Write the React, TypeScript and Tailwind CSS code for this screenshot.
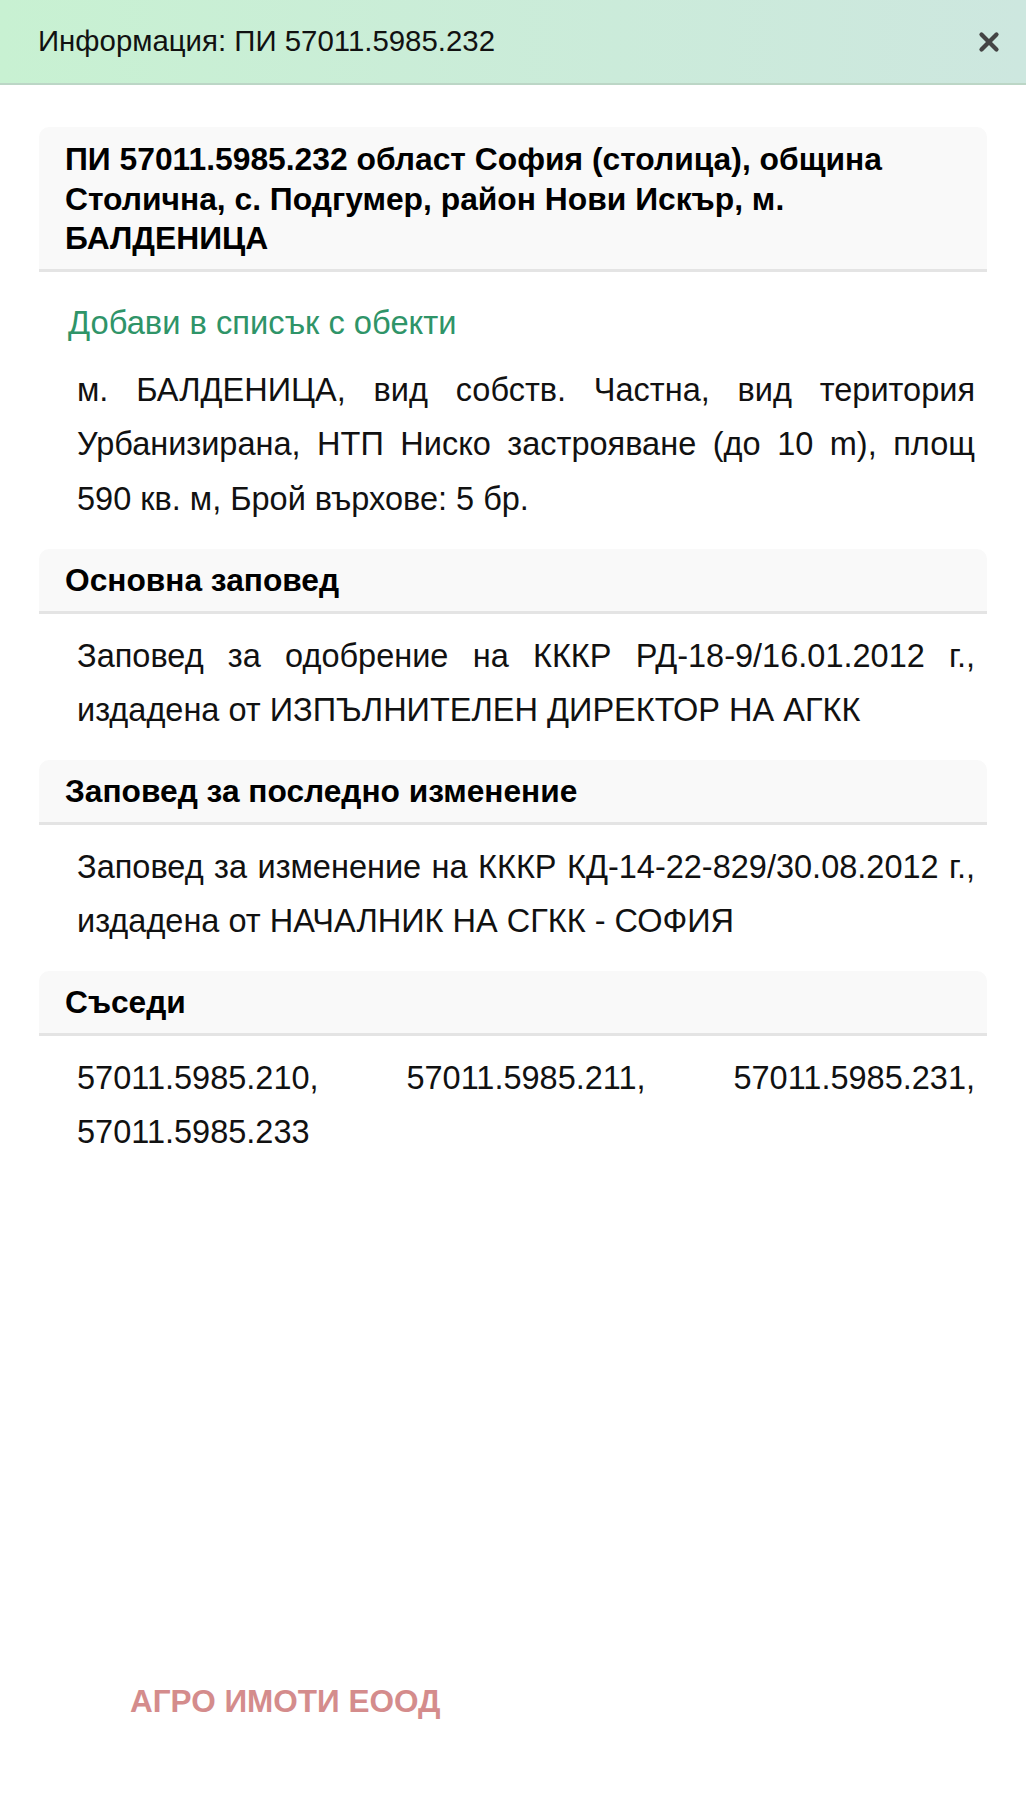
import { X } from 'lucide-react'

const sections = [
  {
    title: 'Основна заповед',
    body: 'Заповед за одобрение на КККР РД-18-9/16.01.2012 г., издадена от ИЗПЪЛНИТЕЛЕН ДИРЕКТОР НА АГКК',
  },
  {
    title: 'Заповед за последно изменение',
    body: 'Заповед за изменение на КККР КД-14-22-829/30.08.2012 г., издадена от НАЧАЛНИК НА СГКК - СОФИЯ',
  },
  {
    title: 'Съседи',
    body: '57011.5985.210, 57011.5985.211, 57011.5985.231, 57011.5985.233',
  },
]

function SectionHead({ children }: { children: React.ReactNode }) {
  return (
    <div className="bg-[#f9f9f9] rounded-t-[10px] border-b-[3px] border-[#e4e4e4] pl-[26px] pr-4 pt-[2px] h-[65px] flex items-center text-[31.7px] font-bold text-black">
      {children}
    </div>
  )
}

export default function App() {
  return (
    <div className="w-[1026px] min-h-[1800px] bg-white text-[#111]" style={{ fontFamily: '"Liberation Sans", Arial, sans-serif' }}>
      {/* Header */}
      <div className="h-[85px] flex items-center justify-between pl-[38px] pr-[22px] bg-gradient-to-r from-[#c8f1d2] to-[#cde7df] border-b-2 border-[#bcd6c6]">
        <span className="text-[29.4px] text-[#111]">Информация: ПИ 57011.5985.232</span>
        <X className="w-[30px] h-[30px] text-[#444]" strokeWidth={3.4} />
      </div>

      <div className="px-[39px] pt-[42px]">
        {/* Title card */}
        <div className="bg-[#f9f9f9] rounded-t-[10px] border-b-[3px] border-[#e4e4e4] pl-[26px] pr-4 pt-[13px] pb-[10px] text-[31.8px] leading-[39.5px] font-bold text-black">
          ПИ 57011.5985.232 област София (столица), община Столична, с. Подгумер, район Нови Искър, м. БАЛДЕНИЦА
        </div>

        <div className="mt-[31px] pl-[29px] text-[32.7px] leading-[40px] text-[#2f9468]">Добави в списък с обекти</div>

        <p className="mt-[20px] pl-[38px] pr-[12px] text-[32.5px] leading-[54.5px] text-justify">
          м. БАЛДЕНИЦА, вид собств. Частна, вид територия Урбанизирана, НТП Ниско застрояване (до 10 m), площ 590 кв. м, Брой върхове: 5 бр.
        </p>

        {sections.map((s) => (
          <div key={s.title} className="mt-[23px]">
            <SectionHead>{s.title}</SectionHead>
            <p className="mt-[15px] pl-[38px] pr-[12px] text-[32.5px] leading-[54px] text-justify">{s.body}</p>
          </div>
        ))}

        <div className="mt-[522px] pl-[91px] text-[31.5px] leading-[40px] font-bold text-[#d48c8c]">АГРО ИМОТИ ЕООД</div>
      </div>
    </div>
  )
}
